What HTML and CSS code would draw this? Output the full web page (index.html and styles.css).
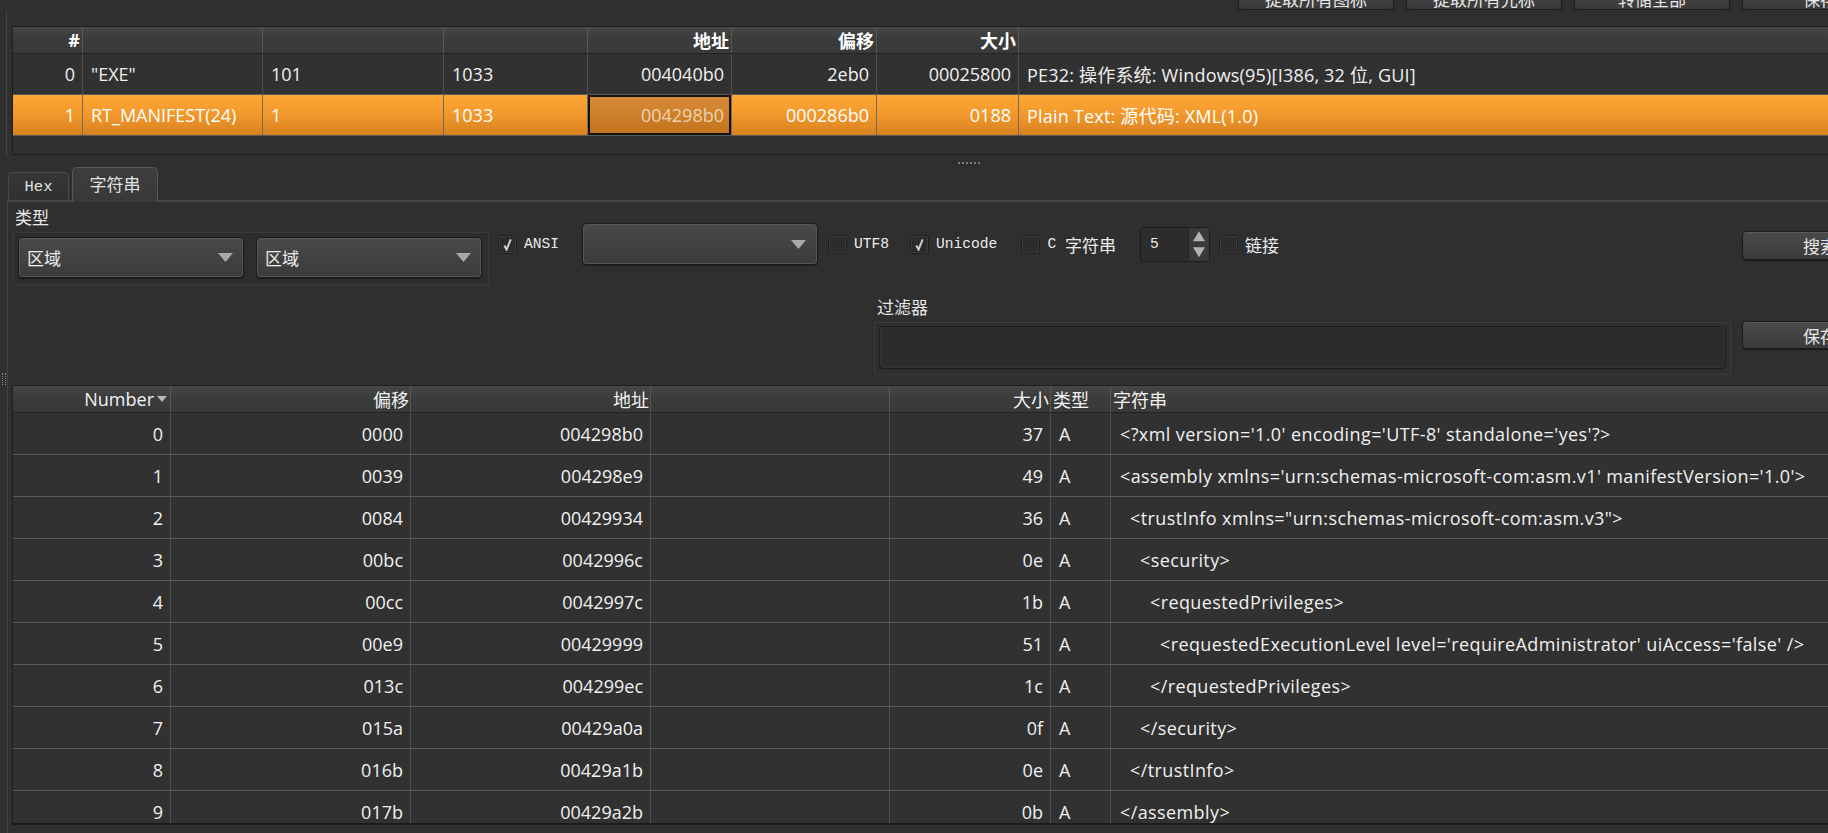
FILE: index.html
```html
<!DOCTYPE html>
<html lang="zh-CN">
<head>
<meta charset="utf-8">
<title>资源</title>
<link rel="stylesheet" href="styles.css">
</head>
<body>
<div class="app">
  <div class="topbar">
    <button class="btn topbtn">提取所有图标</button>
    <button class="btn topbtn">提取所有光标</button>
    <button class="btn topbtn">转储全部</button>
    <button class="btn topbtn">保存</button>
  </div>

  <div class="top-pane">
    <div class="tbl tbl-top">
      <div class="thead">
        <div class="th">#</div><div class="th"></div><div class="th"></div><div class="th"></div>
        <div class="th">地址</div><div class="th">偏移</div><div class="th">大小</div><div class="th"></div>
      </div>
      <div class="tr">
        <div class="td r">0</div><div class="td">"EXE"</div><div class="td">101</div><div class="td">1033</div>
        <div class="td r">004040b0</div><div class="td r">2eb0</div><div class="td r">00025800</div>
        <div class="td d">PE32: 操作系统: Windows(95)[I386, 32 位, GUI]</div>
      </div>
      <div class="tr sel">
        <div class="td r">1</div><div class="td">RT_MANIFEST(24)</div><div class="td">1</div><div class="td">1033</div>
        <div class="td r cur">004298b0</div><div class="td r">000286b0</div><div class="td r">0188</div>
        <div class="td d">Plain Text: 源代码: XML(1.0)</div>
      </div>
    </div>
  </div>

  <div class="hsplit"><span class="hgrip"></span></div>

  <div class="tabs">
    <div class="tab tab-hex"><span class="mono">Hex</span></div>
    <div class="tab tab-str"><span class="cjk">字符串</span></div>
  </div>

  <div class="main">
    <div class="vgutter"><span class="vgrip"></span></div>
    <div class="panel">
      <div class="ctrl-row">
        <div class="type-col">
          <div class="cjk type-label">类型</div>
          <div class="group">
            <div class="combo"><span class="cjk">区域</span><svg class="arrow" viewBox="0 0 15 9"><polygon points="0,0 15,0 7.5,9"/></svg></div>
            <div class="combo"><span class="cjk">区域</span><svg class="arrow" viewBox="0 0 15 9"><polygon points="0,0 15,0 7.5,9"/></svg></div>
          </div>
        </div>
        <div class="opts">
          <span class="cb"><svg viewBox="0 0 12 14"><path d="M2.5 8 L5 12.5 L9.5 1.5"/></svg></span>
          <span class="lbl mono ml7">ANSI</span>
          <div class="combo combo-enc ml23"><svg class="arrow" viewBox="0 0 15 9"><polygon points="0,0 15,0 7.5,9"/></svg></div>
          <span class="cb ml10"></span>
          <span class="lbl mono ml7">UTF8</span>
          <span class="cb ml21"><svg viewBox="0 0 12 14"><path d="M2.5 8 L5 12.5 L9.5 1.5"/></svg></span>
          <span class="lbl mono ml7">Unicode</span>
          <span class="cb ml24"></span>
          <span class="lbl ml7"><span class="mono">C </span><span class="cjk">字符串</span></span>
          <div class="spin ml24">
            <span class="mono spin-val">5</span>
            <span class="spin-btns">
              <svg viewBox="0 0 14 12"><polygon points="7,1 13,11 1,11"/></svg>
              <svg viewBox="0 0 14 12"><polygon points="1,1 13,1 7,11"/></svg>
            </span>
          </div>
          <span class="cb ml9"></span>
          <span class="lbl cjk ml7">链接</span>
        </div>
        <div class="spacer"></div>
        <button class="btn side-btn btn-search"><span class="cjk">搜索</span></button>
      </div>

      <div class="filter-row">
        <div class="filter">
          <div class="cjk filter-label">过滤器</div>
          <div class="filter-frame"><div class="filter-input"></div></div>
        </div>
        <div class="spacer"></div>
        <button class="btn side-btn btn-save"><span class="cjk">保存</span></button>
      </div>

      <div class="tbl tbl-bot">
        <div class="thead">
          <div class="th reg">Number<svg class="sort" viewBox="0 0 10 6"><polygon points="0,0 10,0 5,6"/></svg></div>
          <div class="th reg">偏移</div>
          <div class="th reg">地址</div>
          <div class="th reg"></div>
          <div class="th reg">大小</div>
          <div class="th reg l">类型</div>
          <div class="th reg l">字符串</div>
        </div>
        <div class="tr"><div class="td r">0</div><div class="td r">0000</div><div class="td r">004298b0</div><div class="td"></div><div class="td r">37</div><div class="td">A</div><div class="td s">&lt;?xml version='1.0' encoding='UTF-8' standalone='yes'?&gt;</div></div>
        <div class="tr"><div class="td r">1</div><div class="td r">0039</div><div class="td r">004298e9</div><div class="td"></div><div class="td r">49</div><div class="td">A</div><div class="td s">&lt;assembly xmlns='urn:schemas-microsoft-com:asm.v1' manifestVersion='1.0'&gt;</div></div>
        <div class="tr"><div class="td r">2</div><div class="td r">0084</div><div class="td r">00429934</div><div class="td"></div><div class="td r">36</div><div class="td">A</div><div class="td s i1">&lt;trustInfo xmlns="urn:schemas-microsoft-com:asm.v3"&gt;</div></div>
        <div class="tr"><div class="td r">3</div><div class="td r">00bc</div><div class="td r">0042996c</div><div class="td"></div><div class="td r">0e</div><div class="td">A</div><div class="td s i2">&lt;security&gt;</div></div>
        <div class="tr"><div class="td r">4</div><div class="td r">00cc</div><div class="td r">0042997c</div><div class="td"></div><div class="td r">1b</div><div class="td">A</div><div class="td s i3">&lt;requestedPrivileges&gt;</div></div>
        <div class="tr"><div class="td r">5</div><div class="td r">00e9</div><div class="td r">00429999</div><div class="td"></div><div class="td r">51</div><div class="td">A</div><div class="td s i4">&lt;requestedExecutionLevel level='requireAdministrator' uiAccess='false' /&gt;</div></div>
        <div class="tr"><div class="td r">6</div><div class="td r">013c</div><div class="td r">004299ec</div><div class="td"></div><div class="td r">1c</div><div class="td">A</div><div class="td s i3">&lt;/requestedPrivileges&gt;</div></div>
        <div class="tr"><div class="td r">7</div><div class="td r">015a</div><div class="td r">00429a0a</div><div class="td"></div><div class="td r">0f</div><div class="td">A</div><div class="td s i2">&lt;/security&gt;</div></div>
        <div class="tr"><div class="td r">8</div><div class="td r">016b</div><div class="td r">00429a1b</div><div class="td"></div><div class="td r">0e</div><div class="td">A</div><div class="td s i1">&lt;/trustInfo&gt;</div></div>
        <div class="tr"><div class="td r">9</div><div class="td r">017b</div><div class="td r">00429a2b</div><div class="td"></div><div class="td r">0b</div><div class="td">A</div><div class="td s">&lt;/assembly&gt;</div></div>
      </div>
    </div>
  </div>
</div>
</body>
</html>
```

FILE: styles.css
```css
* { box-sizing: border-box; margin: 0; padding: 0; }
html, body { width: 1828px; height: 833px; overflow: hidden; background: #2f2f2f; }
body { font-family: "Open Sans", "Noto Sans CJK SC", sans-serif; color: #ececec; }

.cjk { font-family: "Noto Sans CJK SC", sans-serif; font-size: 17px; }
.mono { font-family: "Liberation Mono", "Noto Sans CJK SC", monospace; font-size: 14.6px; }

.app { width: 1910px; height: 833px; display: flex; flex-direction: column; }

/* buttons */
.btn {
  flex: none; width: 156px; border: 1px solid #1c1c1c; border-radius: 4px;
  background: linear-gradient(#4a4a4a, #3b3b3b);
  box-shadow: inset 0 1px 0 rgba(255,255,255,.09), 0 1px 1px #1a1a1a;
  color: #e8e8e8; font-family: "Noto Sans CJK SC", sans-serif; font-size: 17px;
  display: flex; align-items: center; justify-content: center;
}
.topbar {
  flex: none; height: 10px; display: flex; justify-content: flex-end; align-items: flex-end;
  gap: 12px; padding-right: 12px; overflow: hidden;
}
.topbtn { height: 28px; padding-top: 4px; }

/* top pane */
.top-pane { flex: none; height: 147px; margin-left: 6px; border-left: 1px solid #444; padding: 16px 0 2px 5px; }

.tbl { background: #313131; border: 1px solid #1e1e1e; overflow: hidden; }
.tbl-top { height: 129px; }
.thead {
  display: grid; height: 27px; border-bottom: 1px solid #222;
  background: linear-gradient(#474747, #3c3c3c 40%, #393939);
}
.th {
  border-right: 1px solid #575757; display: flex; align-items: center; justify-content: flex-end;
  padding-right: 2px; font-size: 18px; font-weight: 700; color: #fff; white-space: nowrap; overflow: hidden;
}
.th.reg { font-weight: 400; padding-right: 1px; color: #f2f2f2; }
.th.l { justify-content: flex-start; padding-left: 2px; }
.sort { width: 10px; height: 6px; margin-left: 3px; margin-right: 2px; fill: #b8b8b8; }

.tr { display: grid; border-bottom: 1px solid #5a5a5a; }
.td {
  border-right: 1px solid #4e4e4e; display: flex; align-items: center; padding: 0 8px;
  font-size: 18px; white-space: pre; overflow: hidden; color: #f0f0f0;
}
.td.r { justify-content: flex-end; padding: 0 7px 0 0; }
.td.d { letter-spacing: 0.2px; }

.tbl-top .thead, .tbl-top .tr { grid-template-columns: 70px 180px 181px 144px 144px 145px 142px 1fr; }
.tbl-top .tr { height: 41px; }

.sel { background: linear-gradient(#fca735, #f39a2d 45%, #d9811f); }
.sel .td { border-right-color: #77695a; color: #fff; }
.sel .td.cur {
  background: linear-gradient(#d98d38, #c2721b);
  box-shadow: inset 0 0 0 2px #141414; color: #ecd2b2;
}

/* splitter */
.hsplit { flex: none; height: 10px; padding: 5px 0 0 958px; }
.hgrip { display: block; width: 22px; height: 2px; border-top: 2px dotted #7c7c7c; }

/* tabs */
.tabs { flex: none; height: 33px; display: flex; align-items: flex-end; gap: 3px; padding-left: 8px; }
.tab {
  display: flex; align-items: center; justify-content: center;
  border: 1px solid #4a4a4a; border-bottom: none; border-radius: 5px 5px 0 0; color: #e2e2e2;
}
.tab-hex { width: 61px; height: 28px; background: linear-gradient(#363636, #303030); }
.tab-hex .mono { font-size: 15.5px; }
.tab-str {
  width: 86px; height: 35px; margin-bottom: -2px; position: relative; z-index: 1;
  background: linear-gradient(#3d3d3d, #393939); border-color: #575757; padding-bottom: 3px;
}

/* main area */
.main { flex: 1; display: flex; min-height: 0; }
.vgutter { flex: none; width: 7px; padding: 173px 0 0 2px; }
.vgrip { display: block; width: 4px; height: 12px; border-left: 1px dotted #8a8a8a; border-right: 1px dotted #8a8a8a; }
.panel {
  flex: 1; display: flex; flex-direction: column; min-width: 0;
  border-left: 1px solid #464646; border-top: 2px solid #474747; padding: 0 12px 0 4px;
}

.ctrl-row { display: flex; align-items: flex-start; flex: none; }
.type-col { margin-left: 1px; }
.type-label { margin: 5px 0 0 2px; line-height: 20px; height: 20px; color: #e8e8e8; }
.group {
  margin-top: 5px; display: flex; gap: 12px; height: 53px;
  border: 1px solid #3a3a3a; padding: 4px 6px 6px 4px; background: #2d2d2d;
}
.combo {
  width: 226px; height: 41px; border: 1px solid #1c1c1c; border-radius: 4px;
  background: linear-gradient(#494949, #3b3b3b);
  box-shadow: inset 0 0 0 1px #555, 0 1px 1px #1a1a1a;
  display: flex; align-items: center; justify-content: space-between; padding: 0 10px 0 8px; color: #ececec;
}
.arrow { width: 15px; height: 9px; fill: #a9a9a9; margin-left: auto; }
.combo-enc { width: 236px; height: 42px; padding-right: 11px; }

.opts { margin: 21px 0 0 9px; height: 42px; display: flex; align-items: center; }
.cb {
  flex: none; width: 19px; height: 19px; border: 1px solid #1f1f1f; border-radius: 2px;
  background: #2b2b2b; box-shadow: inset 0 0 0 1px #3c3c3c;
  display: flex; align-items: center; justify-content: center;
}
.cb svg { width: 11px; height: 13px; fill: none; stroke: #cfcfcf; stroke-width: 2.2; }
.lbl { color: #ececec; white-space: pre; display: flex; align-items: center; }
.lbl.mono, .lbl .mono { font-size: 14.6px; }
.ml7 { margin-left: 7px; } .ml9 { margin-left: 9px; } .ml10 { margin-left: 10px; }
.ml21 { margin-left: 21px; } .ml23 { margin-left: 23px; } .ml24 { margin-left: 24px; }

.spin {
  flex: none; width: 70px; height: 35px; border: 1px solid #1c1c1c; border-radius: 3px;
  background: #2c2c2c; display: flex; align-items: stretch;
}
.spin-val { flex: 1; display: flex; align-items: center; padding-left: 9px; color: #e8e8e8; }
.spin-btns { width: 21px; display: flex; flex-direction: column; background: #3a3a3a; border-left: 1px solid #262626; }
.spin-btns svg { flex: 1; width: 100%; fill: #b3b3b3; padding: 2px 3px; }

.spacer { flex: 1; }
.side-btn { color: #e6e6e6; }
.btn-search { margin-top: 29px; height: 29px; }
.btn-save { margin-top: 36px; height: 28px; }

.filter-row { display: flex; align-items: flex-start; flex: none; }
.filter { margin-left: 862px; width: 857px; }
.filter-label { margin-top: 12px; padding-left: 3px; line-height: 20px; height: 20px; color: #e8e8e8; }
.filter-frame { margin-top: 5px; height: 53px; border: 1px solid #3b3b3b; padding: 3px 4px 5px 4px; }
.filter-input { height: 43px; border: 1px solid #1d1d1d; border-radius: 4px; background: #2c2c2c; box-shadow: inset 0 0 0 1px #333; }

/* bottom table */
.tbl-bot { flex: none; margin: 10px 0 0 0; height: 440px; border-bottom: 2px solid #1b1b1b; }
.tbl-bot .thead, .tbl-bot .tr { grid-template-columns: 158px 240px 240px 239px 161px 60px 1fr; }
.tbl-bot .tr { height: 42px; flex: none; }
.tbl-bot .td.s { padding-left: 9px; letter-spacing: 0.4px; }
.tbl-bot .td.i1 { padding-left: 19px; }
.tbl-bot .td.i2 { padding-left: 29px; }
.tbl-bot .td.i3 { padding-left: 39px; }
.tbl-bot .td.i4 { padding-left: 49px; }
```
